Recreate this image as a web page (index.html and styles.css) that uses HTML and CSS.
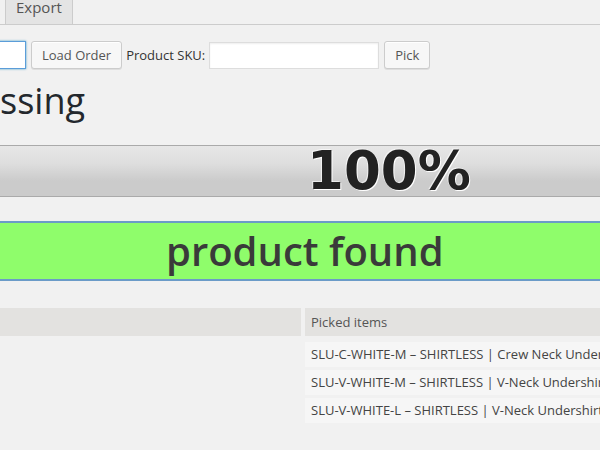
FILE: index.html
```html
<!DOCTYPE html>
<html>
<head>
<meta charset="utf-8">
<link rel="stylesheet" href="styles.css">
</head>
<body>
<div class="tabs">
  <span class="tab">Export</span>
</div>
<form class="order-form">
  <input class="order-input" type="text">
  <button class="btn" type="button">Load Order</button>
  <label class="lbl">Product SKU:</label>
  <input class="sku-input" type="text">
  <button class="btn" type="button">Pick</button>
</form>
<h1 class="title">ssing</h1>
<div class="progress"><span class="pct">100%</span></div>
<div class="status">product found</div>
<div class="items">
  <div class="col col-left">
    <div class="head"></div>
  </div>
  <div class="col col-right">
    <div class="head">Picked items</div>
    <div class="row">SLU-C-WHITE-M – SHIRTLESS | Crew Neck Undershirt</div>
    <div class="row">SLU-V-WHITE-M – SHIRTLESS | V-Neck Undershirt</div>
    <div class="row">SLU-V-WHITE-L – SHIRTLESS | V-Neck Undershirt</div>
  </div>
</div>
</body>
</html>
```
FILE: styles.css
```css
html, body {
  margin: 0;
  padding: 0;
  background: #f1f1f1;
  overflow: hidden;
}
body {
  width: 600px;
  height: 450px;
  font-family: "Open Sans", "Liberation Sans", sans-serif;
  font-size: 13px;
  color: #444;
}
.tabs {
  height: 24px;
  border-bottom: 1px solid #ccc;
  display: flex;
  align-items: flex-end;
}
.tab {
  margin-left: 5px;
  width: 68px;
  height: 24px;
  box-sizing: border-box;
  background: #e4e4e4;
  border-right: 1px solid #ccc;
  border-left: 1px solid #ccc;
  color: #555;
  font-size: 15px;
  font-weight: 400;
  line-height: 14px;
  padding: 0 0 0 10px;
}
.order-form {
  display: flex;
  align-items: center;
  margin-top: 16px;
  height: 28px;
}
.order-input {
  width: 100px;
  height: 28px;
  margin: 0 0 0 -74px;
  box-sizing: border-box;
  border: 1px solid #5b9dd9;
  box-shadow: 0 0 2px rgba(30,140,190,.8);
  background: #fff;
  outline: none;
}
.btn {
  height: 28px;
  margin-left: 5px;
  padding: 0 10px;
  font-family: "Open Sans", "Liberation Sans", sans-serif;
  font-size: 13px;
  color: #555;
  background: #f7f7f7;
  border: 1px solid #ccc;
  border-radius: 3px;
  box-shadow: inset 0 1px 0 #fff, 0 1px 0 rgba(0,0,0,.08);
}
.lbl {
  margin-left: 4px;
  color: #333;
}
.sku-input {
  width: 170px;
  height: 27px;
  box-sizing: border-box;
  margin-left: 4px;
  border: 1px solid #ddd;
  box-shadow: inset 0 1px 2px rgba(0,0,0,.07);
  background: #fff;
}
.title {
  margin: 6px 0 0 0;
  font-size: 36px;
  font-weight: 400;
  line-height: 52px;
  color: #23282d;
}
.progress {
  margin-top: 18px;
  height: 50px;
  border-top: 1px solid #aaa;
  border-bottom: 1px solid #aaa;
  background: linear-gradient(to bottom, #e7e7e7 0%, #dedede 35%, #cbcbcb 70%, #cbcbcb 100%);
  padding-left: 307px;
}
.pct {
  font-family: "DejaVu Sans", Verdana, sans-serif;
  font-weight: bold;
  font-size: 53px;
  line-height: 50px;
  color: #222;
  text-shadow: 1px 1px 0 #fff, -1px -1px 0 rgba(255,255,255,.6);
}
.status {
  margin-top: 24px;
  height: 56px;
  border-top: 2px solid #6b9bc8;
  border-bottom: 2px solid #6b9bc8;
  background: #8ffd6b;
  color: #3a3a3a;
  font-size: 40px;
  font-weight: 600;
  line-height: 56px;
  padding-left: 166px;
}
.items {
  margin-top: 27px;
  display: flex;
  gap: 4px;
}
.col-left {
  width: 301px;
  flex: none;
}
.col-right {
  flex: 1;
  min-width: 0;
  white-space: nowrap;
  overflow: hidden;
}
.head {
  height: 28px;
  background: #e3e2e0;
  line-height: 28px;
  padding-left: 6px;
  color: #555;
}
.row {
  margin-top: 3px;
  height: 25px;
  line-height: 25px;
  padding-left: 6px;
  background: #f6f6f6;
  color: #444;
}
.col-right .head + .row {
  margin-top: 6px;
}
```
